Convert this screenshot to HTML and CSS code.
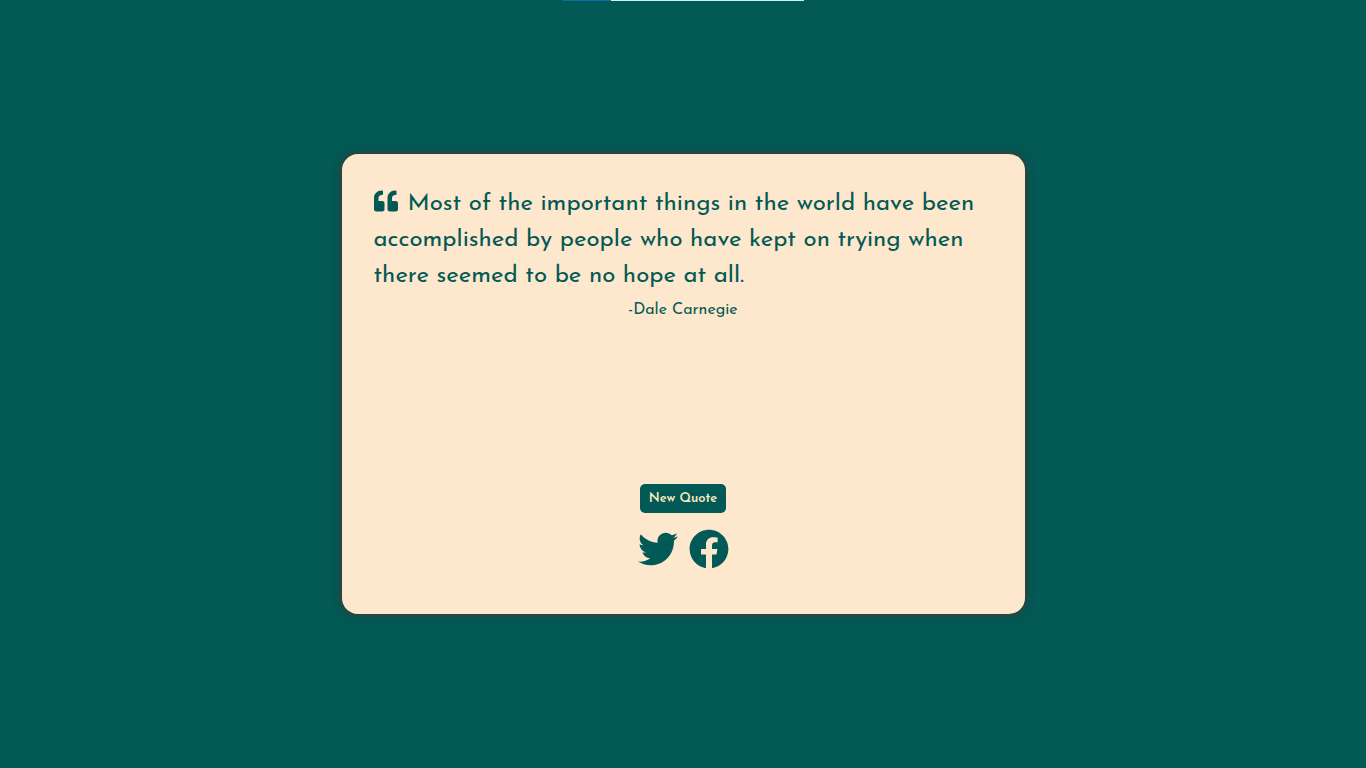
FILE: index.html
```html
<!DOCTYPE html>
<html lang="en">
<head>
<meta charset="utf-8">
<meta name="viewport" content="width=device-width, initial-scale=1">
<title>Quote Generator</title>
<link rel="stylesheet" href="styles.css">
</head>
<body>
<div class="loader" aria-hidden="true"><div class="loader-fill"></div></div>
<main class="quote-card">
  <div class="quote">
    <p class="quote-text"><svg class="quote-mark" viewBox="0 0 512 512" aria-hidden="true"><path d="M464 256h-80v-64c0-35.3 28.7-64 64-64h8c13.3 0 24-10.7 24-24V56c0-13.3-10.7-24-24-24h-8c-88.4 0-160 71.6-160 160v240c0 26.5 21.5 48 48 48h128c26.5 0 48-21.5 48-48V304c0-26.5-21.5-48-48-48zm-288 0H96v-64c0-35.3 28.7-64 64-64h8c13.3 0 24-10.7 24-24V56c0-13.3-10.7-24-24-24h-8C71.6 32 0 103.6 0 192v240c0 26.5 21.5 48 48 48h128c26.5 0 48-21.5 48-48V304c0-26.5-21.5-48-48-48z"/></svg>Most of the important things in the world have been accomplished by people who have kept on trying when there seemed to be no hope at all.</p>
    <p class="author">-Dale Carnegie</p>
  </div>
  <div class="actions">
    <button class="new-quote" type="button">New Quote</button>
    <div class="share">
      <a class="share-link" href="#" aria-label="Share on Twitter"><svg class="share-icon" viewBox="0 0 512 512" aria-hidden="true"><path d="M459.37 151.716c.325 4.548.325 9.097.325 13.645 0 138.72-105.583 298.558-298.558 298.558-59.452 0-114.68-17.219-161.137-47.106 8.447.974 16.568 1.299 25.34 1.299 49.055 0 94.213-16.568 130.274-44.832-46.132-.975-84.792-31.188-98.112-72.772 6.498.974 12.995 1.624 19.818 1.624 9.421 0 18.843-1.3 27.614-3.573-48.081-9.747-84.143-51.98-84.143-102.985v-1.299c13.969 7.797 30.214 12.67 47.431 13.319-28.264-18.843-46.781-51.005-46.781-87.391 0-19.492 5.197-37.36 14.294-52.954 51.655 63.675 129.3 105.258 216.365 109.807-1.624-7.797-2.599-15.918-2.599-24.04 0-57.828 46.782-104.934 104.934-104.934 30.213 0 57.502 12.67 76.67 33.137 23.715-4.548 46.456-13.32 66.599-25.34-7.798 24.366-24.366 44.833-46.132 57.827 21.117-2.273 41.584-8.122 60.426-16.243-14.292 20.791-32.161 39.308-52.628 54.253z"/></svg></a>
      <a class="share-link" href="#" aria-label="Share on Facebook"><svg class="share-icon" viewBox="0 0 512 512" aria-hidden="true"><path d="M504 256C504 119 393 8 256 8S8 119 8 256c0 123.78 90.69 226.38 209.25 245V327.69h-63V256h63v-54.64c0-62.15 37-96.48 93.67-96.48 27.14 0 55.52 4.84 55.52 4.84v61h-31.28c-30.8 0-40.41 19.12-40.41 38.73V256h68.78l-11 71.69h-57.78V501C413.31 482.38 504 379.78 504 256z"/></svg></a>
    </div>
  </div>
</main>
</body>
</html>
```
FILE: styles.css
```css
* {
  box-sizing: border-box;
  margin: 0;
}

body {
  min-height: 100vh;
  display: flex;
  align-items: center;
  justify-content: center;
  background: #025955;
  color: #025955;
  font-family: "Josefin Sans", Lato, sans-serif;
}

/* Thin progress strip over the top edge of the page */
.loader {
  position: absolute;
  top: 0;
  left: 50%;
  width: 241px;
  height: 1px;
  margin-left: -120px;
  background: #ccf3ef;
}

.loader-fill {
  width: 20%;
  height: 100%;
  background: #0870ad;
}

.quote-card {
  display: flex;
  flex-direction: column;
  justify-content: space-between;
  width: 50%;
  min-height: 60vh;
  padding: 32px 32px 45px;
  border-radius: 16px;
  background: #fde8cd;
  box-shadow: 0 0 10px #48332e;
}

.quote-text {
  font-size: 24px;
  line-height: 36px;
}

.quote-mark {
  width: 24px;
  height: 24px;
  margin-right: 10px;
  vertical-align: -3px;
  fill: currentColor;
}

.author {
  font-size: 16px;
  line-height: 32px;
  text-align: center;
}

.actions {
  display: flex;
  flex-direction: column;
  align-items: center;
  gap: 16px;
}

.new-quote {
  padding: 6px 9px;
  border: 0;
  border-radius: 5px;
  background: #025955;
  color: #fbeebc;
  font-family: inherit;
  font-size: 13px;
  font-weight: 600;
  line-height: 17px;
  cursor: pointer;
}

.share {
  display: flex;
  gap: 11px;
}

.share-link {
  display: flex;
  color: inherit;
}

.share-icon {
  width: 40px;
  height: 40px;
  fill: currentColor;
}
```
